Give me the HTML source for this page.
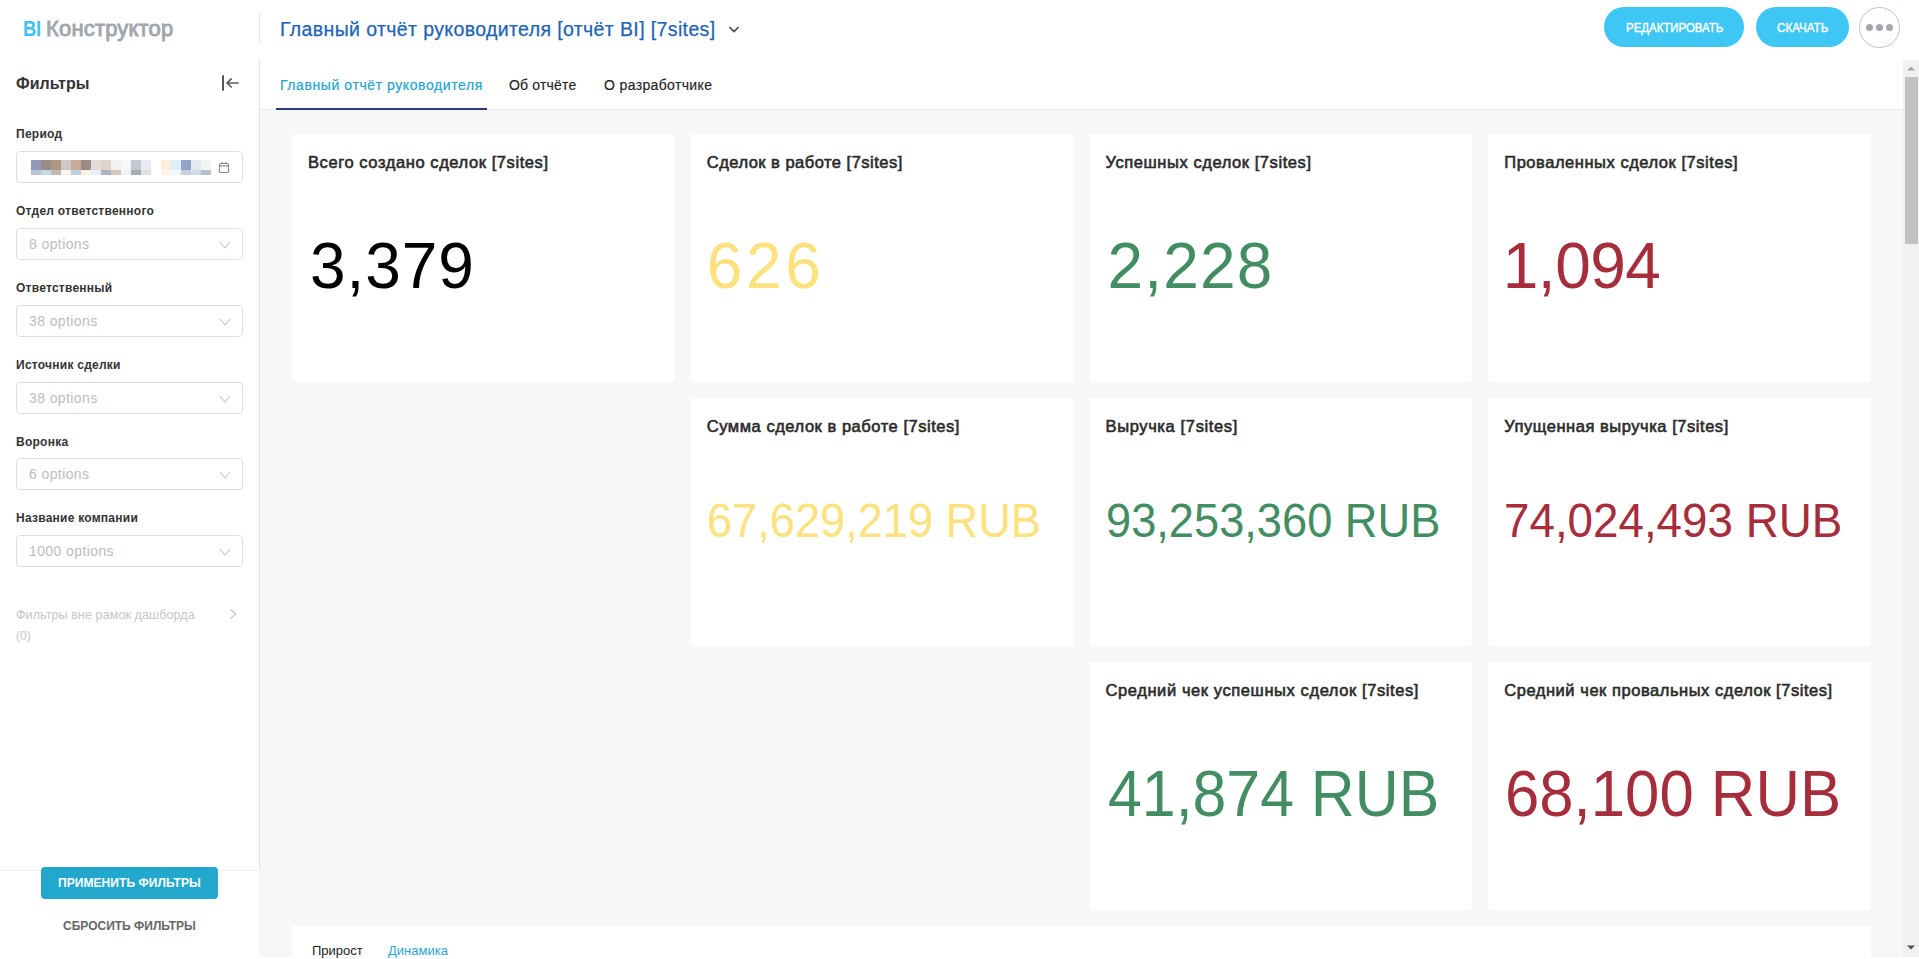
<!DOCTYPE html>
<html><head><meta charset="utf-8">
<style>
*{box-sizing:border-box;margin:0;padding:0}
html,body{width:1919px;height:959px;overflow:hidden;background:#fff;font-family:"Liberation Sans",sans-serif}
.a{position:absolute;white-space:nowrap;line-height:1}
.card{position:absolute;background:#fff;border-radius:4px}
.box{position:absolute;left:16px;width:227px;height:32px;border:1px solid #dedede;border-radius:4px;background:#fff}
.chev{position:absolute;right:11px;top:12px}
</style></head><body>

<div class="a" style="left:23px;top:18.38px;font-size:22px;font-weight:700;letter-spacing:-0.5px;color:#3dc3f1;transform:scaleX(0.84);transform-origin:0 0">BI</div>
<div class="a" style="left:46px;top:18.38px;font-size:22px;font-weight:400;letter-spacing:0.18px;color:#a2a6ad;-webkit-text-stroke:0.9px #a2a6ad">Конструктор</div>
<div style="position:absolute;left:259px;top:13px;width:1px;height:30px;background:#e3e4e8"></div>
<div class="a" style="left:280px;top:19.79px;font-size:19.5px;font-weight:400;letter-spacing:0.38px;color:#1f63b5;-webkit-text-stroke:0.25px #1f63b5">Главный отчёт руководителя [отчёт BI] [7sites]</div>
<svg style="position:absolute;left:728px;top:25px" width="12" height="9" viewBox="0 0 12 9"><path d="M1.5 2 L6 6.5 L10.5 2" fill="none" stroke="#40464f" stroke-width="1.6"/></svg>
<div style="position:absolute;left:1604px;top:7px;width:140px;height:40px;border-radius:20px;background:#3ec6f4"></div>
<div class="a" style="left:1625.5px;top:22.22px;font-size:12.5px;font-weight:400;letter-spacing:0px;color:#fff;-webkit-text-stroke:0.4px #fff;transform:scaleX(0.915);transform-origin:0 0">РЕДАКТИРОВАТЬ</div>
<div style="position:absolute;left:1756px;top:7px;width:93px;height:40px;border-radius:20px;background:#3ec6f4"></div>
<div class="a" style="left:1777px;top:22.22px;font-size:12.5px;font-weight:400;letter-spacing:0px;color:#fff;-webkit-text-stroke:0.4px #fff;transform:scaleX(0.93);transform-origin:0 0">СКАЧАТЬ</div>
<div style="position:absolute;left:1859px;top:7px;width:41px;height:41px;border-radius:50%;border:1px solid #bdc3cc;background:#fff"></div>
<div style="position:absolute;left:1866px;top:24px;width:7px;height:7px;border-radius:50%;background:#a3a7ae"></div>
<div style="position:absolute;left:1876px;top:24px;width:7px;height:7px;border-radius:50%;background:#a3a7ae"></div>
<div style="position:absolute;left:1886px;top:24px;width:7px;height:7px;border-radius:50%;background:#a3a7ae"></div>
<div style="position:absolute;left:259px;top:60px;width:1px;height:810px;background:#e1e1e1"></div>
<div class="a" style="left:16px;top:76.46px;font-size:16px;font-weight:700;letter-spacing:0px;color:#333;">Фильтры</div>
<svg style="position:absolute;left:220px;top:73px" width="22" height="20" viewBox="0 0 22 20"><path d="M3 3 V17" stroke="#585858" stroke-width="2" stroke-linecap="round"/><path d="M7 10 H18 M11.2 5.8 L7 10 L11.2 14" fill="none" stroke="#585858" stroke-width="1.7" stroke-linecap="round" stroke-linejoin="round"/></svg>
<div class="a" style="left:16px;top:127.84px;font-size:12px;font-weight:700;letter-spacing:0.25px;color:#333;">Период</div>
<div class="box" style="top:151px"><div style="position:absolute;left:14px;top:8px;width:10px;height:10px;background:#9499b5"></div><div style="position:absolute;left:14px;top:18px;width:10px;height:5px;background:#b7c4d1"></div><div style="position:absolute;left:24px;top:8px;width:10px;height:10px;background:#9a8a88"></div><div style="position:absolute;left:24px;top:18px;width:10px;height:5px;background:#c8d7e4"></div><div style="position:absolute;left:34px;top:8px;width:10px;height:10px;background:#ab9782"></div><div style="position:absolute;left:34px;top:18px;width:10px;height:5px;background:#c0bab5"></div><div style="position:absolute;left:44px;top:8px;width:10px;height:10px;background:#ccc8c6"></div><div style="position:absolute;left:44px;top:18px;width:10px;height:5px;background:#f8f4ee"></div><div style="position:absolute;left:54px;top:8px;width:10px;height:10px;background:#c5ab98"></div><div style="position:absolute;left:54px;top:18px;width:10px;height:5px;background:#bfcedb"></div><div style="position:absolute;left:64px;top:8px;width:10px;height:10px;background:#9c8a84"></div><div style="position:absolute;left:64px;top:18px;width:10px;height:5px;background:#fdf0e4"></div><div style="position:absolute;left:74px;top:8px;width:10px;height:10px;background:#e5d9d3"></div><div style="position:absolute;left:74px;top:18px;width:10px;height:5px;background:#e8eef3"></div><div style="position:absolute;left:84px;top:8px;width:10px;height:10px;background:#ddd3cf"></div><div style="position:absolute;left:84px;top:18px;width:10px;height:5px;background:#aab4c2"></div><div style="position:absolute;left:94px;top:8px;width:10px;height:10px;background:#f3f1ef"></div><div style="position:absolute;left:94px;top:18px;width:10px;height:5px;background:#d6c6b6"></div><div style="position:absolute;left:104px;top:8px;width:10px;height:10px;background:#f6f7f8"></div><div style="position:absolute;left:104px;top:18px;width:10px;height:5px;background:#f2f3f4"></div><div style="position:absolute;left:114px;top:8px;width:10px;height:10px;background:#c1c8d2"></div><div style="position:absolute;left:114px;top:18px;width:10px;height:5px;background:#a9abb5"></div><div style="position:absolute;left:124px;top:8px;width:10px;height:10px;background:#e8ebef"></div><div style="position:absolute;left:124px;top:18px;width:10px;height:5px;background:#dde0e5"></div><div style="position:absolute;left:134px;top:8px;width:10px;height:10px;background:#ffffff"></div><div style="position:absolute;left:134px;top:18px;width:10px;height:5px;background:#ffffff"></div><div style="position:absolute;left:144px;top:8px;width:10px;height:10px;background:#fcefdc"></div><div style="position:absolute;left:144px;top:18px;width:10px;height:5px;background:#fdf3e6"></div><div style="position:absolute;left:154px;top:8px;width:10px;height:10px;background:#ddeff8"></div><div style="position:absolute;left:154px;top:18px;width:10px;height:5px;background:#f0fafd"></div><div style="position:absolute;left:164px;top:8px;width:10px;height:10px;background:#92a5c8"></div><div style="position:absolute;left:164px;top:18px;width:10px;height:5px;background:#c8d1d8"></div><div style="position:absolute;left:174px;top:8px;width:10px;height:10px;background:#e5eaf2"></div><div style="position:absolute;left:174px;top:18px;width:10px;height:5px;background:#cfdce9"></div><div style="position:absolute;left:184px;top:8px;width:10px;height:10px;background:#f1f2f4"></div><div style="position:absolute;left:184px;top:18px;width:10px;height:5px;background:#b8bfcc"></div><svg style="position:absolute;left:200px;top:7.5px" width="13" height="14" viewBox="0 0 13 14"><rect x="2.5" y="3.5" width="9" height="9" rx="1" fill="none" stroke="#8a8a8a" stroke-width="1.2"/><line x1="2.5" y1="6" x2="11.5" y2="6" stroke="#8a8a8a" stroke-width="1.2"/><line x1="5" y1="2" x2="5" y2="4" stroke="#8a8a8a" stroke-width="1.2"/><line x1="9" y1="2" x2="9" y2="4" stroke="#8a8a8a" stroke-width="1.2"/></svg></div>
<div class="a" style="left:16px;top:204.84px;font-size:12px;font-weight:700;letter-spacing:0.25px;color:#333;">Отдел ответственного</div>
<div class="box" style="top:228px"><div class="a" style="left:12px;top:8.15px;font-size:14px;letter-spacing:0.4px;color:#bdbdbd">8 options</div><svg class="chev" width="12" height="8" viewBox="0 0 12 8"><path d="M1 1 L6 7 L11 1" fill="none" stroke="#c4c4c4" stroke-width="1.1"/></svg></div>
<div class="a" style="left:16px;top:281.84px;font-size:12px;font-weight:700;letter-spacing:0.25px;color:#333;">Ответственный</div>
<div class="box" style="top:305px"><div class="a" style="left:12px;top:8.15px;font-size:14px;letter-spacing:0.4px;color:#bdbdbd">38 options</div><svg class="chev" width="12" height="8" viewBox="0 0 12 8"><path d="M1 1 L6 7 L11 1" fill="none" stroke="#c4c4c4" stroke-width="1.1"/></svg></div>
<div class="a" style="left:16px;top:358.84px;font-size:12px;font-weight:700;letter-spacing:0.25px;color:#333;">Источник сделки</div>
<div class="box" style="top:382px"><div class="a" style="left:12px;top:8.15px;font-size:14px;letter-spacing:0.4px;color:#bdbdbd">38 options</div><svg class="chev" width="12" height="8" viewBox="0 0 12 8"><path d="M1 1 L6 7 L11 1" fill="none" stroke="#c4c4c4" stroke-width="1.1"/></svg></div>
<div class="a" style="left:16px;top:435.84px;font-size:12px;font-weight:700;letter-spacing:0.25px;color:#333;">Воронка</div>
<div class="box" style="top:458px"><div class="a" style="left:12px;top:8.15px;font-size:14px;letter-spacing:0.4px;color:#bdbdbd">6 options</div><svg class="chev" width="12" height="8" viewBox="0 0 12 8"><path d="M1 1 L6 7 L11 1" fill="none" stroke="#c4c4c4" stroke-width="1.1"/></svg></div>
<div class="a" style="left:16px;top:511.84px;font-size:12px;font-weight:700;letter-spacing:0.25px;color:#333;">Название компании</div>
<div class="box" style="top:535px"><div class="a" style="left:12px;top:8.15px;font-size:14px;letter-spacing:0.4px;color:#bdbdbd">1000 options</div><svg class="chev" width="12" height="8" viewBox="0 0 12 8"><path d="M1 1 L6 7 L11 1" fill="none" stroke="#c4c4c4" stroke-width="1.1"/></svg></div>
<div class="a" style="left:16px;top:609.42px;font-size:12.5px;font-weight:400;letter-spacing:0.1px;color:#c6c6c6;">Фильтры вне рамок дашборда</div>
<div class="a" style="left:16px;top:630.34px;font-size:12px;font-weight:400;letter-spacing:0px;color:#c6c6c6;">(0)</div>
<svg style="position:absolute;left:228px;top:607px" width="10" height="14" viewBox="0 0 10 14"><path d="M2.3 2.5 L8 7 L2.3 11.5" fill="none" stroke="#c4c4c4" stroke-width="1.1"/></svg>
<div style="position:absolute;left:0;top:870px;width:259px;height:1px;background:#f0f0f0"></div>
<div style="position:absolute;left:259px;top:871px;width:1px;height:86px;background:#f7f7f7"></div>
<div style="position:absolute;left:41px;top:867px;width:177px;height:32px;border-radius:4px;background:#22a7cd"></div>
<div class="a" style="left:58px;top:877.04px;font-size:12px;font-weight:700;letter-spacing:0.07px;color:#fff;">ПРИМЕНИТЬ ФИЛЬТРЫ</div>
<div class="a" style="left:63px;top:920.04px;font-size:12px;font-weight:700;letter-spacing:0px;color:#666;">СБРОСИТЬ ФИЛЬТРЫ</div>
<div style="position:absolute;left:260px;top:60px;width:1643px;height:897px;background:#f7f7f7">
<div style="position:absolute;left:0;top:0;width:1643px;height:50px;background:#fff;border-bottom:1px solid #ececec">
<div class="a" style="left:20px;top:17.85px;font-size:14px;font-weight:400;letter-spacing:0.58px;color:#23a3d0;-webkit-text-stroke:0.2px #23a3d0">Главный отчёт руководителя</div>
<div class="a" style="left:249px;top:17.85px;font-size:14px;font-weight:400;letter-spacing:0.18px;color:#222;-webkit-text-stroke:0.15px #222">Об отчёте</div>
<div class="a" style="left:344px;top:17.85px;font-size:14px;font-weight:400;letter-spacing:0.36px;color:#222;-webkit-text-stroke:0.15px #222">О разработчике</div>
<div style="position:absolute;left:16px;top:48px;width:211px;height:2px;background:#2c3a72"></div>
</div>
<div class="card" style="left:32px;top:74px;width:382.75px;height:248px"><div class="a" style="left:16px;top:19.63px;font-size:16.5px;font-weight:400;letter-spacing:0.582px;color:#2b2b2b;-webkit-text-stroke:0.6px #2b2b2b">Всего создано сделок [7sites]</div><div class="a" style="left:18px;top:99.82px;font-size:64px;font-weight:400;letter-spacing:0.9px;color:#000;">3,379</div></div>
<div class="card" style="left:430.75px;top:74px;width:382.75px;height:248px"><div class="a" style="left:16px;top:19.63px;font-size:16.5px;font-weight:400;letter-spacing:0.487px;color:#2b2b2b;-webkit-text-stroke:0.6px #2b2b2b">Сделок в работе [7sites]</div><div class="a" style="left:16px;top:99.82px;font-size:64px;font-weight:400;letter-spacing:3.6px;color:#fce17f;">626</div></div>
<div class="card" style="left:829.5px;top:74px;width:382.75px;height:248px"><div class="a" style="left:16px;top:19.63px;font-size:16.5px;font-weight:400;letter-spacing:0.57px;color:#2b2b2b;-webkit-text-stroke:0.6px #2b2b2b">Успешных сделок [7sites]</div><div class="a" style="left:18px;top:99.82px;font-size:64px;font-weight:400;letter-spacing:1.2px;color:#438d63;">2,228</div></div>
<div class="card" style="left:1228.25px;top:74px;width:382.75px;height:248px"><div class="a" style="left:16px;top:19.63px;font-size:16.5px;font-weight:400;letter-spacing:0.538px;color:#2b2b2b;-webkit-text-stroke:0.6px #2b2b2b">Проваленных сделок [7sites]</div><div class="a" style="left:14.5px;top:99.82px;font-size:64px;font-weight:400;letter-spacing:-0.5px;color:#a52d3c;">1,094</div></div>
<div class="card" style="left:430.75px;top:338px;width:382.75px;height:248px"><div class="a" style="left:16px;top:19.63px;font-size:16.5px;font-weight:400;letter-spacing:0.538px;color:#2b2b2b;-webkit-text-stroke:0.6px #2b2b2b">Сумма сделок в работе [7sites]</div><div class="a" style="left:16px;top:99.37px;font-size:48px;font-weight:400;letter-spacing:0px;color:#fce17f;transform:scaleX(0.941);transform-origin:0 0">67,629,219 RUB</div></div>
<div class="card" style="left:829.5px;top:338px;width:382.75px;height:248px"><div class="a" style="left:16px;top:19.63px;font-size:16.5px;font-weight:400;letter-spacing:0.633px;color:#2b2b2b;-webkit-text-stroke:0.6px #2b2b2b">Выручка [7sites]</div><div class="a" style="left:16px;top:99.37px;font-size:48px;font-weight:400;letter-spacing:0px;color:#438d63;transform:scaleX(0.942);transform-origin:0 0">93,253,360 RUB</div></div>
<div class="card" style="left:1228.25px;top:338px;width:382.75px;height:248px"><div class="a" style="left:16px;top:19.63px;font-size:16.5px;font-weight:400;letter-spacing:0.54px;color:#2b2b2b;-webkit-text-stroke:0.6px #2b2b2b">Упущенная выручка [7sites]</div><div class="a" style="left:16px;top:99.37px;font-size:48px;font-weight:400;letter-spacing:0px;color:#a52d3c;transform:scaleX(0.953);transform-origin:0 0">74,024,493 RUB</div></div>
<div class="card" style="left:829.5px;top:602px;width:382.75px;height:248px"><div class="a" style="left:16px;top:19.63px;font-size:16.5px;font-weight:400;letter-spacing:0.589px;color:#2b2b2b;-webkit-text-stroke:0.6px #2b2b2b">Средний чек успешных сделок [7sites]</div><div class="a" style="left:18px;top:99.82px;font-size:64px;font-weight:400;letter-spacing:0px;color:#438d63;transform:scaleX(0.95);transform-origin:0 0">41,874 RUB</div></div>
<div class="card" style="left:1228.25px;top:602px;width:382.75px;height:248px"><div class="a" style="left:16px;top:19.63px;font-size:16.5px;font-weight:400;letter-spacing:0.541px;color:#2b2b2b;-webkit-text-stroke:0.6px #2b2b2b">Средний чек провальных сделок [7sites]</div><div class="a" style="left:17px;top:99.82px;font-size:64px;font-weight:400;letter-spacing:0px;color:#a52d3c;transform:scaleX(0.964);transform-origin:0 0">68,100 RUB</div></div>
<div class="card" style="left:32px;top:866px;width:1579px;height:200px;border-radius:0"><div class="a" style="left:20px;top:17.50px;font-size:13px;font-weight:400;letter-spacing:0px;color:#222;">Прирост</div><div class="a" style="left:96px;top:17.50px;font-size:13px;font-weight:400;letter-spacing:0px;color:#2ba6d2;">Динамика</div></div>
</div>
<div style="position:absolute;left:1903px;top:60px;width:16px;height:897px;background:#f1f1f1"><div style="position:absolute;left:2px;top:17px;width:13px;height:167px;background:#c1c1c1"></div><svg style="position:absolute;left:4px;top:6px" width="8" height="5" viewBox="0 0 8 5"><path d="M0 4.5 L4 0.5 L8 4.5Z" fill="#a3a3a3"/></svg><svg style="position:absolute;left:4px;top:885px" width="8" height="5" viewBox="0 0 8 5"><path d="M0 0.5 L4 4.5 L8 0.5Z" fill="#505050"/></svg></div>
</body></html>
